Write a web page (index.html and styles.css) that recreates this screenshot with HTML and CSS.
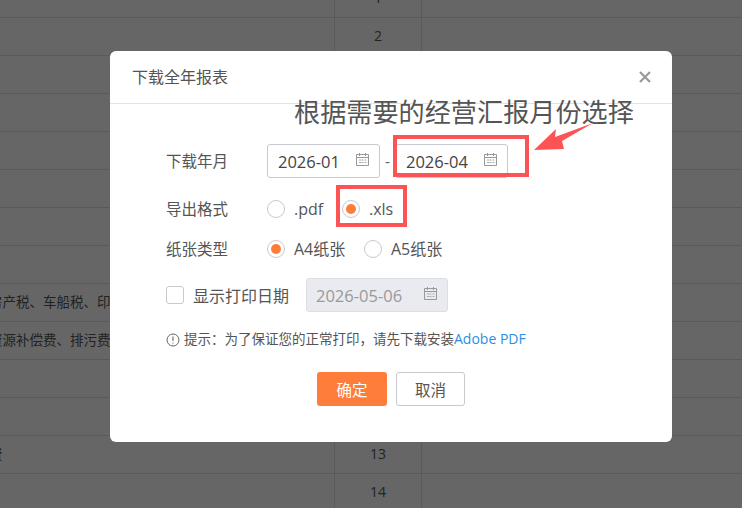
FILE: index.html
```html
<!DOCTYPE html>
<html lang="zh-CN">
<head>
  <meta charset="UTF-8" />
  <title>下载全年报表</title>
  <link rel="stylesheet" href="styles.css">
</head>
<body>
  <!-- page behind the dialog -->
  <div class="sheet">
    <div class="row"><div class="cell-name"></div><div class="cell-num">1</div><div class="cell-rest"></div></div>
    <div class="row"><div class="cell-name"></div><div class="cell-num">2</div><div class="cell-rest"></div></div>
    <div class="row"><div class="cell-name"></div><div class="cell-num">3</div><div class="cell-rest"></div></div>
    <div class="row"><div class="cell-name"></div><div class="cell-num">4</div><div class="cell-rest"></div></div>
    <div class="row"><div class="cell-name"></div><div class="cell-num">5</div><div class="cell-rest"></div></div>
    <div class="row"><div class="cell-name"></div><div class="cell-num">6</div><div class="cell-rest"></div></div>
    <div class="row"><div class="cell-name"></div><div class="cell-num">7</div><div class="cell-rest"></div></div>
    <div class="row"><div class="cell-name"></div><div class="cell-num">8</div><div class="cell-rest"></div></div>
    <div class="row"><div class="cell-name">房产税、车船税、印花税</div><div class="cell-num">9</div><div class="cell-rest"></div></div>
    <div class="row"><div class="cell-name">资源补偿费、排污费</div><div class="cell-num">10</div><div class="cell-rest"></div></div>
    <div class="row"><div class="cell-name"></div><div class="cell-num">11</div><div class="cell-rest"></div></div>
    <div class="row"><div class="cell-name"></div><div class="cell-num">12</div><div class="cell-rest"></div></div>
    <div class="row"><div class="cell-name">费</div><div class="cell-num">13</div><div class="cell-rest"></div></div>
    <div class="row"><div class="cell-name"></div><div class="cell-num">14</div><div class="cell-rest"></div></div>
  </div>

  <div class="dialog">
    <div class="dialog-head">
      <span class="dialog-title">下载全年报表</span>
      <svg class="close" width="12" height="12" viewBox="0 0 12 12"><path d="M1 1l10 10M11 1L1 11" stroke="#999" stroke-width="2.2" fill="none"/></svg>
    </div>

    <div class="dialog-body">
      <div class="form-row first">
        <label class="form-label">下载年月</label>
        <div class="date-input">
          <span>2026-01</span>
          <svg class="cal" width="15" height="15" viewBox="0 0 15 15"><use href="#cal"/></svg>
        </div>
        <span class="dash">-</span>
        <div class="date-input">
          <span>2026-04</span>
          <svg class="cal" width="15" height="15" viewBox="0 0 15 15"><use href="#cal"/></svg>
        </div>
      </div>

      <div class="form-row second">
        <label class="form-label">导出格式</label>
        <span class="radio"></span><span class="radio-text w-pdf">.pdf</span>
        <span class="radio on"></span><span class="radio-text">.xls</span>
      </div>

      <div class="form-row third">
        <label class="form-label">纸张类型</label>
        <span class="radio on"></span><span class="radio-text w-a4">A4纸张</span>
        <span class="radio"></span><span class="radio-text">A5纸张</span>
      </div>

      <div class="form-row fourth">
        <span class="checkbox"></span><span class="check-text">显示打印日期</span>
        <div class="date-input disabled">
          <span>2026-05-06</span>
          <svg class="cal" width="15" height="15" viewBox="0 0 15 15"><use href="#cal"/></svg>
        </div>
      </div>

      <div class="hint">
        <svg width="14" height="14" viewBox="0 0 14 14"><circle cx="7" cy="7" r="6" fill="none" stroke="#666" stroke-width="1"/><path d="M7 3.4v4.6M7 9.4v1.2" stroke="#666" stroke-width="1.1"/></svg>
        <span class="hint-text">提示：为了保证您的正常打印，请先下载安装<a class="hint-link">Adobe PDF</a></span>
      </div>

      <div class="dialog-foot">
        <button class="btn btn-ok">确定</button>
        <button class="btn btn-cancel">取消</button>
      </div>
    </div>
  </div>

  <!-- screenshot markup on top -->
  <div class="note-text">根据需要的经营汇报月份选择</div>
  <div class="mark mark-date"></div>
  <div class="mark mark-xls"></div>
  <svg class="note-arrow" width="70" height="40" viewBox="530 115 70 40"><polygon points="534,150 556,129 555,137 593,123 562,141 564,149" fill="#fc5454"/></svg>

  <svg width="0" height="0" class="defs">
    <symbol id="cal" viewBox="0 0 15 15">
      <path d="M1.500 2.500h12v11h-12zM1.500 5.500h12M4.500 1v3M10.500 1v3" fill="none" stroke="#999" stroke-width="1"/>
      <path d="M4 8h2M6.500 8h2M9.500 8h2M4 10.500h2M6.500 10.500h2M9.500 10.500h2" fill="none" stroke="#aaa" stroke-width="1"/>
    </symbol>
  </svg>
</body>
</html>
```

FILE: styles.css
```css
body {
  margin: 0;
  height: 508px;
  overflow: hidden;
  position: relative;
  background: #666;
  color: #222;
  font-family: "Open Sans", "Noto Sans CJK SC", sans-serif;
  font-size: 14px;
}

.sheet {
  margin-top: -20px;
}

.row {
  display: flex;
  height: 37px;
  border-bottom: 1px solid #5a5a5a;
  line-height: 36px;
}

.cell-name {
  width: 334px;
  box-sizing: border-box;
  font-size: 13.500px;
  text-indent: -11px;
  white-space: nowrap;
  overflow: hidden;
}

.cell-num {
  width: 88px;
  box-sizing: border-box;
  border-left: 1px solid #5a5a5a;
  border-right: 1px solid #5a5a5a;
  text-align: center;
}

.cell-rest {
  flex: 1;
}

.dialog {
  position: absolute;
  left: 110px;
  top: 51px;
  width: 562px;
  height: 391px;
  background: #fff;
  border-radius: 6px;
  color: #555;
}

.dialog-head {
  height: 53px;
  box-sizing: border-box;
  border-bottom: 1px solid #e2e3e6;
  padding: 0 21px 0 22px;
  display: flex;
  align-items: center;
  justify-content: space-between;
}

.dialog-title {
  font-size: 16px;
  line-height: 50px;
  color: #555;
}

.dialog-body {
  padding: 0 56px;
}

.form-row {
  display: flex;
  align-items: center;
  height: 34px;
  font-size: 15.500px;
}

.form-row.first { margin-top: 40px; }
.form-row.second { margin-top: 14px; }
.form-row.third { margin-top: 6px; }
.form-row.fourth { margin-top: 12px; }

.form-label {
  width: 101px;
  line-height: 30px;
}

.date-input {
  width: 113px;
  height: 34px;
  box-sizing: border-box;
  border: 1px solid #c8cad0;
  border-radius: 3px;
  padding: 0 9px 0 10px;
  display: flex;
  align-items: center;
  justify-content: space-between;
  font-size: 16.500px;
  color: #444;
}

.date-input.disabled {
  width: 142px;
  padding-left: 9px;
  background: #e9ebf0;
  border-color: #dcdee3;
  color: #999;
}

.cal {
  margin-top: -4px;
}

.dash {
  width: 15px;
  text-align: center;
  color: #666;
}

.radio {
  width: 18px;
  height: 18px;
  box-sizing: border-box;
  border: 1px solid #c8cad0;
  border-radius: 50%;
  margin-right: 9px;
  display: flex;
  align-items: center;
  justify-content: center;
}

.radio.on::after {
  content: "";
  width: 10px;
  height: 10px;
  border-radius: 50%;
  background: #ff7d3b;
}

.radio-text {
  font-size: 16px;
  line-height: 30px;
}

.w-pdf { width: 48px; }
.w-a4 { width: 70px; }

.checkbox {
  width: 18px;
  height: 18px;
  box-sizing: border-box;
  border: 1px solid #c8cad0;
  border-radius: 3px;
  margin-right: 9px;
}

.check-text {
  width: 113px;
  font-size: 16px;
  white-space: nowrap;
}

.hint {
  display: flex;
  align-items: center;
  gap: 4px;
  height: 20px;
  margin-top: 18px;
  font-size: 13.500px;
}

.hint-text {
  line-height: 18px;
  margin-bottom: 2px;
}

.hint-link {
  color: #2d8ee6;
  font-size: 14px;
}

.dialog-foot {
  display: flex;
  justify-content: center;
  gap: 9px;
  margin-top: 22px;
}

.btn {
  height: 34px;
  border-radius: 3px;
  font-family: inherit;
  font-size: 15.500px;
  cursor: pointer;
}

.btn-ok {
  width: 70px;
  background: #ff7d3b;
  border: none;
  color: #fff;
}

.btn-cancel {
  width: 69px;
  background: #fff;
  border: 1px solid #c8cad0;
  color: #555;
}

.close {
  display: block;
}

.note-text {
  position: absolute;
  left: 294px;
  top: 93px;
  font-size: 26.150px;
  line-height: 38px;
  white-space: nowrap;
  color: #555;
}

.mark {
  position: absolute;
  box-sizing: border-box;
  border: 4px solid #fc5454;
}

.mark-date {
  left: 393px;
  top: 135px;
  width: 136px;
  height: 42px;
}

.mark-xls {
  left: 336px;
  top: 185px;
  width: 71px;
  height: 42px;
}

.note-arrow {
  position: absolute;
  left: 530px;
  top: 115px;
}

.defs {
  position: absolute;
}
```
